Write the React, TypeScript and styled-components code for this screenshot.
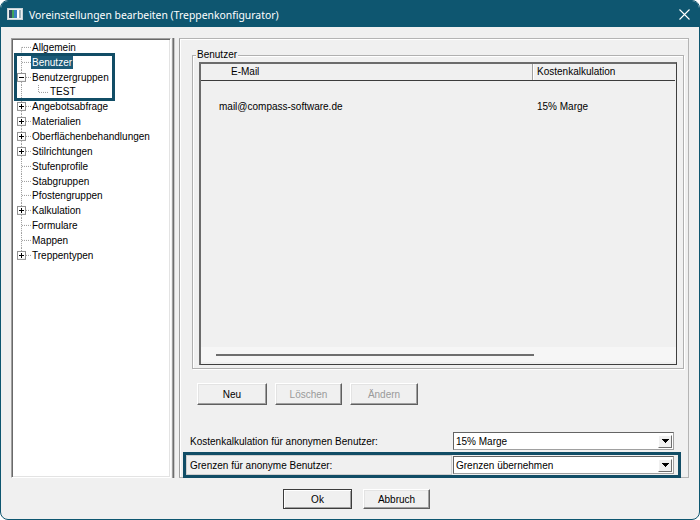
import React from 'react';
import styled, { createGlobalStyle } from 'styled-components';

const TEAL = '#0e5670';
const MARK = '#114d66';

const GlobalStyle = createGlobalStyle`
  html, body { margin: 0; padding: 0; background: #ffffff; }
  body { font-family: "Liberation Sans", Arial, sans-serif; }
  *, *::before, *::after { box-sizing: border-box; }
`;

const Window = styled.div`
  width: 700px;
  height: 520px;
  display: flex;
  flex-direction: column;
  border: 1px solid ${TEAL};
  border-radius: 8px;
  overflow: hidden;
  background: #f0f0f0;
`;

const TitleBar = styled.div`
  height: 26px;
  flex: none;
  background: ${TEAL};
  display: flex;
  align-items: center;
  padding: 0 9px 0 6px;
  color: #ffffff;
`;

const TitleText = styled.span`
  margin-left: 6px;
  margin-top: 2px;
  font-family: "Noto Sans", "Liberation Sans", sans-serif;
  font-size: 10.4px;
`;

const CloseButton = styled.span`
  margin-left: auto;
  display: flex;
  align-items: center;
`;

const Content = styled.div`
  flex: 1;
  display: flex;
  flex-direction: column;
  padding: 11px 10px 10px 10px;
  min-height: 0;
`;

const Main = styled.div`
  flex: 1;
  display: flex;
  min-height: 0;
`;

const TreeBox = styled.div`
  width: 160px;
  flex: none;
  background: #ffffff;
  border: 1px solid;
  border-color: #a0a0a0 #ffffff #ffffff #a0a0a0;
  box-shadow: inset 1px 1px 0 #696969, inset -1px -1px 0 #e3e3e3;
  padding: 1px 0 0 1px;
  font-size: 10px;
  color: #000;
`;

const Splitter = styled.div`
  width: 8px;
  flex: none;
  background: linear-gradient(to right, #f0f0f0 0 1px, #a0a0a0 1px 2px, #6e6e6e 2px 3px, #c8c8c8 3px 4px, #f0f0f0 4px);
`;

const RightPanel = styled.div`
  flex: 1;
  display: flex;
  flex-direction: column;
  border: 1px solid;
  border-color: #b4b4b4 #b4b4b4 #b4b4b4 #a0a0a0;
  box-shadow: inset 1px 1px 0 #ffffff;
  font-size: 10px;
  color: #000;
`;

const GroupBox = styled.div`
  flex: 1;
  position: relative;
  display: flex;
  flex-direction: column;
  margin: 16px 4px 0 12px;
  padding: 6px 6px 3px 6px;
  border: 1px solid #b0b0b0;
  box-shadow: inset 1px 1px 0 #ffffff, 1px 1px 0 #ffffff;
  min-height: 0;
`;

const Legend = styled.span`
  position: absolute;
  left: 3px;
  top: -7px;
  padding: 0 1px;
  line-height: 12px;
  background: #f0f0f0;
`;

const ListView = styled.div`
  flex: 1;
  display: flex;
  flex-direction: column;
  border-style: solid;
  border-width: 2px 1px 1px 2px;
  border-color: #6b6b6b #3f3f3f #3f3f3f #6b6b6b;
  background: #f0f0f0;
`;

const ListHeader = styled.div`
  display: grid;
  grid-template-columns: 331px 1fr;
  height: 17px;
  border-bottom: 1px solid #3c3c3c;
  margin-right: 1px;
`;

const HeaderCell = styled.div<{ $pad: number; $divider?: boolean }>`
  line-height: 16px;
  padding-left: ${(p) => p.$pad}px;
  border-left: ${(p) => (p.$divider ? '1px solid #a0a0a0' : 'none')};
  box-shadow: ${(p) => (p.$divider ? 'inset 1px 0 0 #ffffff' : 'none')};
  white-space: nowrap;
`;

const ListRow = styled.div`
  display: grid;
  grid-template-columns: 331px 1fr;
  margin-top: 19px;
  height: 14px;
  line-height: 14px;
`;

const RowCell = styled.div<{ $pad: number }>`
  padding-left: ${(p) => p.$pad}px;
  white-space: nowrap;
`;

const ListSpacer = styled.div`
  flex: 1;
`;

const HScroll = styled.div`
  height: 15px;
  margin-bottom: 2px;
  background: #f6f6f6;
  padding: 7px 0 0 15px;
`;

const HThumb = styled.div`
  width: 318px;
  height: 2px;
  background: #6e6e6e;
`;

const ButtonRow = styled.div`
  display: flex;
  gap: 8px;
  margin: 14px 0 0 17px;
`;

const ClassicButton = styled.button<{ $w: number; $h: number; $default?: boolean }>`
  width: ${(p) => p.$w}px;
  height: ${(p) => p.$h}px;
  padding: 0;
  font-family: "Liberation Sans", Arial, sans-serif;
  font-size: 10px;
  color: ${(p) => (p.disabled ? '#9a9a9a' : '#000')};
  background: #f0f0f0;
  border: 1px solid;
  border-color: ${(p) => (p.$default ? '#3c3c3c' : '#ffffff #5f5f5f #5f5f5f #ffffff')};
  box-shadow: ${(p) =>
    p.$default
      ? 'inset 1px 1px 0 #ffffff, inset -1px -1px 0 #a0a0a0'
      : 'inset -1px -1px 0 #a0a0a0, inset 1px 1px 0 #e3e3e3'};
  cursor: default;
`;

const SettingRow = styled.div<{ $marked?: boolean; $gap: number }>`
  display: flex;
  align-items: center;
  height: 20px;
  margin: ${(p) => p.$gap}px 10px 0 6px;
  outline: ${(p) => (p.$marked ? `3px solid ${MARK}` : 'none')};
`;

const SettingLabel = styled.div<{ $marked?: boolean }>`
  flex: 1;
  height: 20px;
  display: flex;
  align-items: center;
  padding-left: ${(p) => (p.$marked ? 3 : 4)}px;
  border: ${(p) => (p.$marked ? '1px solid #cfcfcf' : 'none')};
  white-space: nowrap;
`;

const Combo = styled.div`
  width: 221px;
  height: 18px;
  flex: none;
  margin: 0 4px 0 1px;
  background: #ffffff;
  border: 1px solid;
  border-color: #646464 #a0a0a0 #a0a0a0 #646464;
  display: flex;
  align-items: center;
  padding: 0 1px 0 2px;
  white-space: nowrap;
`;

const DropButton = styled.span`
  margin-left: auto;
  width: 14px;
  height: 13px;
  background: #f0f0f0;
  border: 1px solid;
  border-color: #ffffff #6e6e6e #6e6e6e #ffffff;
  display: flex;
  align-items: center;
  justify-content: center;
`;

const BottomSpacer = styled.div`
  height: 2px;
  flex: none;
`;

const Footer = styled.div`
  display: flex;
  justify-content: center;
  gap: 11px;
  margin-top: 11px;
  padding-left: 13px;
  height: 20px;
  flex: none;
`;

/* ---------- tree ---------- */

const TreeRow = styled.div`
  display: flex;
  align-items: center;
  height: 14.85px;
  white-space: nowrap;
`;

const TreeLabel = styled.span<{ $selected?: boolean }>`
  padding: 0 1px;
  line-height: 13px;
  background: ${(p) => (p.$selected ? '#1b5a77' : 'transparent')};
  color: ${(p) => (p.$selected ? '#ffffff' : '#000')};
`;

const MarkedGroup = styled.div`
  position: relative;
  &::after {
    content: '';
    position: absolute;
    left: 1px;
    top: -2px;
    width: 101px;
    height: 48px;
    border: 3px solid ${MARK};
    pointer-events: none;
  }
`;

type Node = {
  label: string;
  level: 1 | 2;
  exp?: '+' | '-';
  first?: boolean;
  last?: boolean;
  selected?: boolean;
};

const DOT = { stroke: '#9a9a9a', strokeWidth: 1, strokeDasharray: '1 1' };

const Gutter: React.FC<{ node: Node }> = ({ node }) => {
  const w = node.level === 1 ? 18 : 36;
  return (
    <svg width={w} height="100%" viewBox={`0 0 ${w} 15`} preserveAspectRatio="none" shapeRendering="crispEdges" style={{ flex: 'none' }}>
      <line x1={8.5} x2={8.5} y1={node.first ? 7.5 : 0} y2={node.last ? 7.5 : 15} {...DOT} />
      {node.level === 1 ? (
        <line x1={9} x2={18} y1={7.5} y2={7.5} {...DOT} />
      ) : (
        <>
          <line x1={25.5} x2={25.5} y1={0} y2={7.5} {...DOT} />
          <line x1={26} x2={36} y1={7.5} y2={7.5} {...DOT} />
        </>
      )}
      {node.exp && (
        <>
          <rect x={4.5} y={3.5} width={8} height={8} fill="#ffffff" stroke="#8f8f8f" />
          <rect x={6} y={7} width={5} height={1} fill="#000" />
          {node.exp === '+' && <rect x={8} y={5} width={1} height={5} fill="#000" />}
        </>
      )}
    </svg>
  );
};

const TreeItem: React.FC<{ node: Node }> = ({ node }) => (
  <TreeRow>
    <Gutter node={node} />
    <TreeLabel $selected={node.selected}>{node.label}</TreeLabel>
  </TreeRow>
);

const before: Node[] = [{ label: 'Allgemein', level: 1, first: true }];
const marked: Node[] = [
  { label: 'Benutzer', level: 1, selected: true },
  { label: 'Benutzergruppen', level: 1, exp: '-' },
  { label: 'TEST', level: 2 },
];
const after: Node[] = [
  { label: 'Angebotsabfrage', level: 1, exp: '+' },
  { label: 'Materialien', level: 1, exp: '+' },
  { label: 'Oberflächenbehandlungen', level: 1, exp: '+' },
  { label: 'Stilrichtungen', level: 1, exp: '+' },
  { label: 'Stufenprofile', level: 1 },
  { label: 'Stabgruppen', level: 1 },
  { label: 'Pfostengruppen', level: 1 },
  { label: 'Kalkulation', level: 1, exp: '+' },
  { label: 'Formulare', level: 1 },
  { label: 'Mappen', level: 1 },
  { label: 'Treppentypen', level: 1, exp: '+', last: true },
];

const AppIcon = () => (
  <svg width="16" height="12" viewBox="0 0 16 12" shapeRendering="crispEdges">
    <rect x="0.5" y="0.5" width="15" height="11" fill="#e8eef0" stroke="#c9d3d7" />
    <rect x="2" y="2" width="3" height="8" fill="#2f4a66" />
    <rect x="5" y="2" width="2" height="8" fill="#3fa35a" />
    <rect x="7" y="2" width="3" height="8" fill="#3a7fc0" />
    <rect x="10" y="2" width="2" height="8" fill="#ffffff" />
    <rect x="12" y="2" width="2" height="8" fill="#9fb2bb" />
  </svg>
);

const CloseIcon = () => (
  <svg width="11" height="11" viewBox="0 0 11 11">
    <path d="M0.5 0.5 L10.5 10.5 M10.5 0.5 L0.5 10.5" stroke="#ffffff" strokeWidth="1.1" fill="none" />
  </svg>
);

const Arrow = () => (
  <svg width="7" height="4" viewBox="0 0 7 4" shapeRendering="crispEdges">
    <path d="M0 0 H7 L3.5 4 Z" fill="#000" />
  </svg>
);

export default function App() {
  return (
    <>
      <GlobalStyle />
      <Window>
        <TitleBar>
          <AppIcon />
          <TitleText>Voreinstellungen bearbeiten (Treppenkonfigurator)</TitleText>
          <CloseButton>
            <CloseIcon />
          </CloseButton>
        </TitleBar>
        <Content>
          <Main>
            <TreeBox>
              {before.map((n) => (
                <TreeItem key={n.label} node={n} />
              ))}
              <MarkedGroup>
                {marked.map((n) => (
                  <TreeItem key={n.label} node={n} />
                ))}
              </MarkedGroup>
              {after.map((n) => (
                <TreeItem key={n.label} node={n} />
              ))}
            </TreeBox>
            <Splitter />
            <RightPanel>
              <GroupBox>
                <Legend>Benutzer</Legend>
                <ListView>
                  <ListHeader>
                    <HeaderCell $pad={30}>E-Mail</HeaderCell>
                    <HeaderCell $pad={4} $divider>
                      Kostenkalkulation
                    </HeaderCell>
                  </ListHeader>
                  <ListRow>
                    <RowCell $pad={18}>mail@compass-software.de</RowCell>
                    <RowCell $pad={5}>15% Marge</RowCell>
                  </ListRow>
                  <ListSpacer />
                  <HScroll>
                    <HThumb />
                  </HScroll>
                </ListView>
              </GroupBox>
              <ButtonRow>
                <ClassicButton $w={70} $h={22}>Neu</ClassicButton>
                <ClassicButton $w={67} $h={22} disabled>
                  Löschen
                </ClassicButton>
                <ClassicButton $w={68} $h={22} disabled>
                  Ändern
                </ClassicButton>
              </ButtonRow>
              <SettingRow $gap={26}>
                <SettingLabel>Kostenkalkulation für anonymen Benutzer:</SettingLabel>
                <Combo>
                  15% Marge
                  <DropButton>
                    <Arrow />
                  </DropButton>
                </Combo>
              </SettingRow>
              <SettingRow $gap={4} $marked>
                <SettingLabel $marked>Grenzen für anonyme Benutzer:</SettingLabel>
                <Combo>
                  Grenzen übernehmen
                  <DropButton>
                    <Arrow />
                  </DropButton>
                </Combo>
              </SettingRow>
              <BottomSpacer />
            </RightPanel>
          </Main>
          <Footer>
            <ClassicButton $w={69} $h={20} $default>
              Ok
            </ClassicButton>
            <ClassicButton $w={67} $h={20}>Abbruch</ClassicButton>
          </Footer>
        </Content>
      </Window>
    </>
  );
}
